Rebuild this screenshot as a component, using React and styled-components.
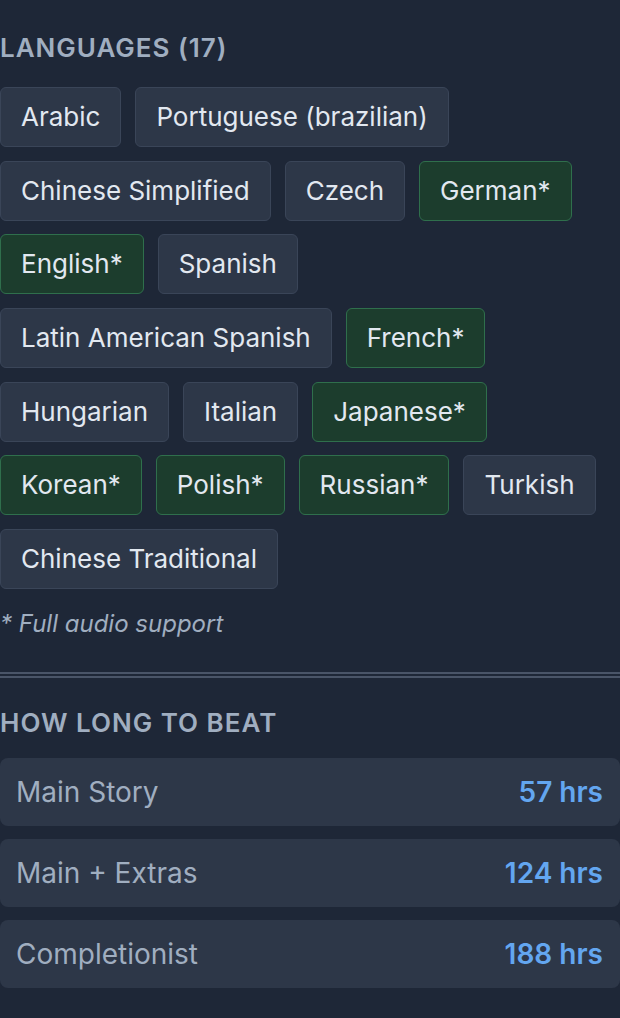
import React from "react";
import styled, { createGlobalStyle } from "styled-components";

const languages = [
  { name: "Arabic", audio: false },
  { name: "Portuguese (brazilian)", audio: false },
  { name: "Chinese Simplified", audio: false },
  { name: "Czech", audio: false },
  { name: "German", audio: true },
  { name: "English", audio: true },
  { name: "Spanish", audio: false },
  { name: "Latin American Spanish", audio: false },
  { name: "French", audio: true },
  { name: "Hungarian", audio: false },
  { name: "Italian", audio: false },
  { name: "Japanese", audio: true },
  { name: "Korean", audio: true },
  { name: "Polish", audio: true },
  { name: "Russian", audio: true },
  { name: "Turkish", audio: false },
  { name: "Chinese Traditional", audio: false },
];

const times = [
  { label: "Main Story", hours: 57 },
  { label: "Main + Extras", hours: 124 },
  { label: "Completionist", hours: 188 },
];

const App = () => {
  return (
    <Page>
      <GlobalStyle />
      <Section>
        <Heading $gap={23}>Languages ({languages.length})</Heading>
        <TagList>
          {languages.map((lang) => (
            <Tag key={lang.name} $audio={lang.audio}>
              {lang.name}
              {lang.audio ? "*" : ""}
            </Tag>
          ))}
        </TagList>
        <Footnote>* Full audio support</Footnote>
      </Section>
      <Divider />
      <Section>
        <Heading $gap={19}>How Long To Beat</Heading>
        <TimeList>
          {times.map((t) => (
            <TimeRow key={t.label}>
              <TimeLabel>{t.label}</TimeLabel>
              <TimeValue>{t.hours} hrs</TimeValue>
            </TimeRow>
          ))}
        </TimeList>
      </Section>
    </Page>
  );
};

export default App;

const GlobalStyle = createGlobalStyle`
  html, body {
    margin: 0;
    padding: 0;
    background: #1e2737;
  }
  body {
    font-family: Inter, "Noto Sans", sans-serif;
  }
`;

const Page = styled.div`
  width: 620px;
  min-height: 1018px;
  padding-top: 32px;
  box-sizing: border-box;
  background: #1e2737;
`;

const Section = styled.section`
  display: flex;
  flex-direction: column;
`;

const Heading = styled.h3`
  margin: 0 0 ${(p) => p.$gap}px 0;
  font-size: 26px;
  line-height: 32px;
  font-weight: 600;
  letter-spacing: 1px;
  text-transform: uppercase;
  color: #a0aec0;
`;

const TagList = styled.div`
  display: flex;
  flex-wrap: wrap;
  gap: 13.7px 14px;
`;

const Tag = styled.span`
  display: inline-block;
  padding: 12px 20px;
  font-size: 26px;
  line-height: 34px;
  border-radius: 6px;
  border: 1px solid ${(p) => (p.$audio ? "#2f6f4c" : "#3a4558")};
  background: ${(p) => (p.$audio ? "#1c3d2d" : "#2d3748")};
  color: #e2e8f0;
`;

const Footnote = styled.p`
  margin: 19px 0 0 0;
  font-size: 24px;
  line-height: 32px;
  font-style: italic;
  color: #a0aec0;
`;

const Divider = styled.hr`
  margin: 32px 0 29px 0;
  height: 0;
  border: none;
  border-top: 6px double #4a5568;
`;

const TimeList = styled.div`
  display: flex;
  flex-direction: column;
  gap: 13px;
`;

const TimeRow = styled.div`
  display: flex;
  justify-content: space-between;
  align-items: center;
  padding: 17px 17px 17px 16px;
  border-radius: 8px;
  background: #2d3748;
`;

const TimeLabel = styled.span`
  font-size: 28px;
  line-height: 34px;
  color: #a0aec0;
`;

const TimeValue = styled.span`
  font-size: 28px;
  line-height: 34px;
  font-weight: 600;
  color: #63a6f0;
`;
